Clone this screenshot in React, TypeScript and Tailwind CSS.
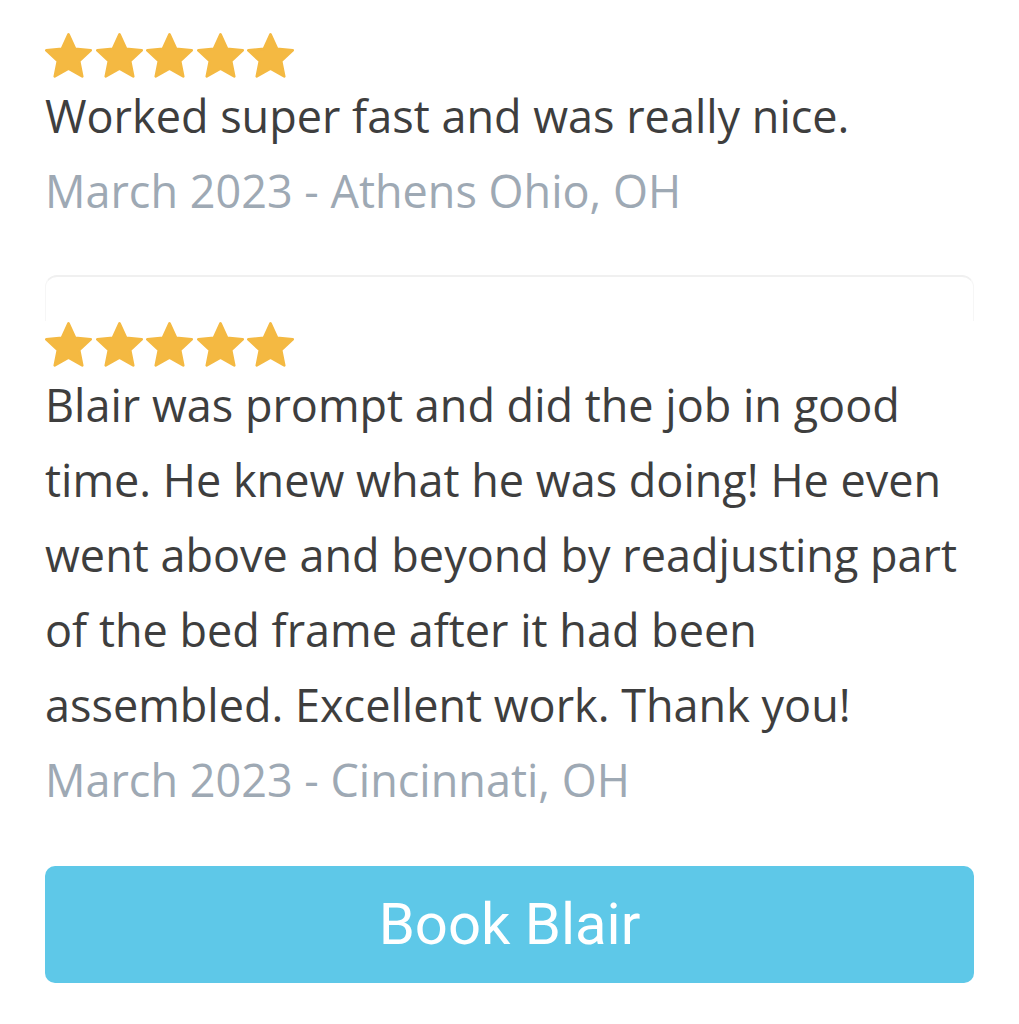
const reviews = [
  {
    lines: ["Worked super fast and was really nice."],
    meta: "March 2023 - Athens Ohio, OH",
  },
  {
    lines: [
      "Blair was prompt and did the job in good",
      "time. He knew what he was doing! He even",
      "went above and beyond by readjusting part",
      "of the bed frame after it had been",
      "assembled. Excellent work. Thank you!",
    ],
    meta: "March 2023 - Cincinnati, OH",
  },
];

function Star() {
  return (
    <svg viewBox="1 1 22 21" className="w-[47px] h-[45px]" fill="#f4b942">
      <path
        d="M12 1.6l3.1 6.7 7.3.8-5.4 5 1.45 7.2L12 17.7l-6.45 3.6L7 14.1l-5.4-5 7.3-.8z"
        stroke="#f4b942"
        strokeWidth="1.2"
        strokeLinejoin="round"
      />
    </svg>
  );
}

function Stars() {
  return (
    <div className="flex gap-[3.5px] h-[46px] items-center">
      {[0, 1, 2, 3, 4].map((i) => (
        <Star key={i} />
      ))}
    </div>
  );
}

function Review({ lines, meta }: { lines: string[]; meta: string }) {
  return (
    <div>
      <Stars />
      <p className="text-[45px] leading-[75px] text-[#3e3e3e]">
        {lines.map((l, i) => (
          <span key={i} className="block whitespace-nowrap">
            {l}
          </span>
        ))}
      </p>
      <p className="text-[45px] leading-[75px] text-[#9ea9b4]">{meta}</p>
    </div>
  );
}

export default function App() {
  return (
    <div
      className="bg-white w-[1019px] min-h-[1024px] px-[45px] pt-[32px]"
      style={{ fontFamily: "'Open Sans', Lato, sans-serif" }}
    >
      <Review {...reviews[0]} />

      {/* divider */}
      <div className="mt-[47px] h-[46px] border-t-2 border-x border-[#f0f0f0] border-x-[#f6f6f6] rounded-t-[12px]" />

      <Review {...reviews[1]} />

      <button
        className="mt-[49px] w-full h-[117px] rounded-[10px] bg-[#5ec8e8] text-white text-[58px]"
        style={{ fontFamily: "Roboto, 'Liberation Sans', sans-serif" }}
      >
        Book Blair
      </button>
    </div>
  );
}
